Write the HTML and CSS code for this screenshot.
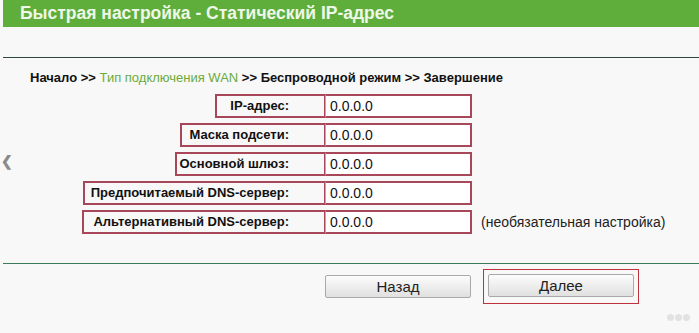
FILE: index.html
```html
<!DOCTYPE html>
<html>
<head>
<meta charset="UTF-8">
<title>Быстрая настройка</title>
	<link rel="stylesheet" href="styles.css">
</head>
<body>
	<div class="page">
		<div class="title">Быстрая настройка - Статический IP-адрес</div>
		<div class="rule top"></div>

		<div class="crumbs">
			<b>Начало &gt;&gt;</b> <span class="cur">Тип подключения WAN</span> <b>&gt;&gt; Беспроводной режим &gt;&gt; Завершение</b>
		</div>

		<div class="form">
			<div class="row">
				<div class="lcol"><div class="lbl w1">IP-адрес:</div></div>
				<div class="inp">0.0.0.0</div>
			</div>
			<div class="row">
				<div class="lcol"><div class="lbl w2">Маска подсети:</div></div>
				<div class="inp">0.0.0.0</div>
			</div>
			<div class="row">
				<div class="lcol"><div class="lbl w3">Основной шлюз:</div></div>
				<div class="inp">0.0.0.0</div>
			</div>
			<div class="row">
				<div class="lcol"><div class="lbl w4">Предпочитаемый DNS-сервер:</div></div>
				<div class="inp">0.0.0.0</div>
			</div>
			<div class="row">
				<div class="lcol"><div class="lbl w5">Альтернативный DNS-сервер:</div></div>
				<div class="inp">0.0.0.0</div>
				<div class="note">(необязательная настройка)</div>
			</div>
		</div>

		<div class="rule bottom"></div>

		<div class="btns">
			<div class="btnwrap"><div class="btn">Назад</div></div>
			<div class="btnwrap mark"><div class="btn">Далее</div></div>
		</div>

		<div class="arrow">&#10094;</div>
		<div class="dots"><i></i><i></i><i></i></div>
	</div>
</body>
</html>
```

FILE: styles.css
```css
body{
	margin: 0;
	background-color: #f8f8f8;
	font-family: "Liberation Sans", Arial, sans-serif;
	color: #111;
}
.page{
	position: relative;
	width: 699px;
	height: 333px;
	padding-left: 3px;
	box-sizing: border-box;
}
.title{
	height: 27px;
	line-height: 26px;
	background-color: #5fae3c;
	color: #eef8e8;
	font-size: 17.5px;
	font-weight: bold;
	padding-left: 17px;
}
.rule{
	height: 1px;
	background-color: #2e4a3c;
}
.rule.top{
	margin-top: 30px;
}
.crumbs{
	margin-top: 12px;
	padding-left: 27px;
	font-size: 13px;
	line-height: 15px;
}
.crumbs .cur{
	color: #6aab3c;
}
.form{
	margin-top: 9px;
	display: flex;
	flex-direction: column;
	gap: 5px;
}
.row{
	display: flex;
	align-items: center;
	height: 24px;
}
.lcol{
	width: 322px;
	display: flex;
	justify-content: flex-end;
}
.lbl{
	height: 24px;
	box-sizing: border-box;
	border: 2px solid #a8475a;
	border-right: 1px solid #a8475a;
	font-size: 13px;
	font-weight: bold;
	line-height: 20px;
	text-align: right;
	padding-right: 35px;
}
.w1{ width: 110px; }
.w2{ width: 145px; }
.w3{ width: 150px; }
.w4{ width: 242px; }
.w5{ width: 243px; }
.inp{
	width: 147px;
	height: 24px;
	box-sizing: border-box;
	border: 2px solid #a8475a;
	border-left: 1px solid #b9a9ac;
	background-color: #fff;
	font-size: 14px;
	line-height: 20px;
	padding-left: 4px;
}
.note{
	margin-left: 9px;
	font-size: 14px;
	color: #222;
}
.rule.bottom{
	margin-top: 29px;
	background-color: #3d7a5c;
}
.btns{
	margin-top: 5px;
	display: flex;
	padding-left: 316px;
	gap: 6px;
}
.btnwrap{
	padding: 5px;
	border: 1px solid transparent;
}
.btnwrap.mark{
	border-color: #c2303c;
	padding: 4px;
}
.btn{
	width: 146px;
	height: 23px;
	box-sizing: border-box;
	border: 1px solid #a9a9a9;
	border-radius: 2px;
	background: linear-gradient(#fcfcfc, #e0e0e0);
	font-size: 15px;
	line-height: 21px;
	text-align: center;
	color: #222;
}
.arrow{
	position: absolute;
	left: 1px;
	top: 153px;
	font-size: 14px;
	font-weight: bold;
	color: #8a8a8a;
}
.dots{
	position: absolute;
	right: 9px;
	top: 314px;
	display: flex;
	gap: 1px;
}
.dots i{
	width: 7px;
	height: 7px;
	border-radius: 50%;
	background-color: #e2e2e2;
}
```
